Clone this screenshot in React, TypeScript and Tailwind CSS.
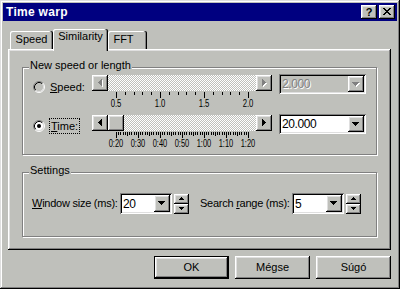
import React from "react";

const raised =
  "shadow-[inset_-1px_-1px_0_#000,inset_1px_1px_0_#fff,inset_-2px_-2px_0_#808080,inset_2px_2px_0_#dfdfdf]";
const sunken =
  "shadow-[inset_1px_1px_0_#808080,inset_-1px_-1px_0_#fff,inset_2px_2px_0_#000,inset_-2px_-2px_0_#dfdfdf]";
const winShadow =
  "shadow-[inset_-1px_-1px_0_#000,inset_1px_1px_0_#dfdfdf,inset_-2px_-2px_0_#808080,inset_2px_2px_0_#fff]";

type Dir = "left" | "right" | "down" | "up5" | "down5";

function triRects(dir: Dir): { x: number; y: number; w: number; h: number }[] {
  const r: { x: number; y: number; w: number; h: number }[] = [];
  if (dir === "left") for (let i = 0; i < 4; i++) r.push({ x: i, y: 3 - i, w: 1, h: 2 * i + 1 });
  if (dir === "right") for (let i = 0; i < 4; i++) r.push({ x: i, y: i, w: 1, h: 7 - 2 * i });
  if (dir === "down") for (let i = 0; i < 4; i++) r.push({ x: i, y: i, w: 7 - 2 * i, h: 1 });
  if (dir === "up5") for (let i = 0; i < 3; i++) r.push({ x: 2 - i, y: i, w: 2 * i + 1, h: 1 });
  if (dir === "down5") for (let i = 0; i < 3; i++) r.push({ x: i, y: i, w: 5 - 2 * i, h: 1 });
  return r;
}

function Tri({ dir, disabled }: { dir: Dir; disabled?: boolean }) {
  const rects = triRects(dir);
  const w = dir === "left" || dir === "right" ? 4 : dir === "down" ? 7 : 5;
  const h = dir === "left" || dir === "right" ? 7 : dir === "down" ? 4 : 3;
  return (
    <svg width={w + 1} height={h + 1} viewBox={`0 0 ${w + 1} ${h + 1}`} shapeRendering="crispEdges">
      {disabled &&
        rects.map((q, i) => <rect key={"s" + i} x={q.x + 1} y={q.y + 1} width={q.w} height={q.h} fill="#fff" />)}
      {rects.map((q, i) => (
        <rect key={i} x={q.x} y={q.y} width={q.w} height={q.h} fill={disabled ? "#808080" : "#000"} />
      ))}
    </svg>
  );
}

function Radio({ checked, fill }: { checked?: boolean; fill: string }) {
  return (
    <svg width="12" height="12" viewBox="0 0 12 12" className="shrink-0">
      <circle cx="6" cy="6" r="4.5" fill={fill} />
      <path d="M2.11 9.89 A5.5 5.5 0 0 1 9.89 2.11" stroke="#808080" fill="none" />
      <path d="M9.89 2.11 A5.5 5.5 0 0 1 2.11 9.89" stroke="#fff" fill="none" />
      <path d="M2.82 9.18 A4.5 4.5 0 0 1 9.18 2.82" stroke="#000" fill="none" />
      <path d="M9.18 2.82 A4.5 4.5 0 0 1 2.82 9.18" stroke="#dfdfdf" fill="none" />
      {checked && <circle cx="6" cy="6" r="2" fill="#000" />}
    </svg>
  );
}

function ArrowBtn({ dir, disabled }: { dir: Dir; disabled?: boolean }) {
  return (
    <div className={`w-[16px] h-[16px] shrink-0 bg-[#bfc0bb] ${raised} flex items-center justify-center`}>
      <Tri dir={dir} disabled={disabled} />
    </div>
  );
}

function Ticks({ count, step, major, mid }: { count: number; step: number; major: number; mid?: number }) {
  const items = [];
  for (let i = 0; i <= count; i++) {
    const x = Math.round(24 + i * step);
    const len = i % major === 0 ? 6 : mid && i % mid === 0 ? 4 : 3;
    items.push(<rect key={i} x={x} y={1} width={1} height={len} fill="#000" />);
  }
  return (
    <svg width="180" height="7" viewBox="0 0 180 7" shapeRendering="crispEdges" className="block">
      {items}
    </svg>
  );
}

function Combo({ value, disabled, wide }: { value: string; disabled?: boolean; wide?: boolean }) {
  return (
    <div
      className={`${sunken} ${disabled ? "bg-[#bfc0bb]" : "bg-white"} ${
        wide ? "w-[87px] h-[20px]" : "w-[52px] h-[21px]"
      } p-[2px] flex items-stretch shrink-0`}
    >
      <span
        className={`flex-1 pl-[1px] text-[12px] leading-[16px] tracking-[-0.4px] flex items-center ${
          disabled ? "text-[#808080] [text-shadow:1px_1px_0_#fff]" : "text-black"
        }`}
      >
        {value}
      </span>
      <div className={`w-[16px] bg-[#bfc0bb] ${raised} flex items-center justify-center`}>
        <Tri dir="down" disabled={disabled} />
      </div>
    </div>
  );
}

function Spinner() {
  return (
    <div className="flex flex-col ml-[2px] mt-[1px] self-start">
      <div className={`w-[15px] h-[10px] bg-[#bfc0bb] ${raised} flex items-center justify-center`}>
        <Tri dir="up5" />
      </div>
      <div className={`w-[15px] h-[10px] bg-[#bfc0bb] ${raised} flex items-center justify-center`}>
        <Tri dir="down5" />
      </div>
    </div>
  );
}

function Group({ label, className, children }: { label: string; className: string; children: React.ReactNode }) {
  return (
    <div
      className={`relative w-[355px] border border-[#808080] shadow-[inset_1px_1px_0_#fff,1px_1px_0_#fff] ${className}`}
    >
      <span className="absolute -top-[9px] left-[6px] px-[1px] bg-[#bfc0bb] leading-[13px]">{label}</span>
      {children}
    </div>
  );
}

function U({ children }: { children: React.ReactNode }) {
  return <span className="underline underline-offset-1">{children}</span>;
}

export default function App() {
  return (
    <div
      className={`w-[400px] h-[289px] bg-[#bfc0bb] p-[3px] flex flex-col ${winShadow} font-['Liberation_Sans',Arial,sans-serif] text-[11px] leading-[13px] text-black select-none`}
    >
      {/* Title bar */}
      <div className="h-[18px] shrink-0 bg-[#000080] flex items-center pl-[3px] pr-[2px]">
        <span className="text-white font-bold text-[12px] leading-[14px] tracking-[0.3px]">Time warp</span>
        <div className="ml-auto flex gap-[2px]">
          <div
            className={`w-[16px] h-[14px] bg-[#bfc0bb] ${raised} flex items-center justify-center font-bold text-[11px] leading-[11px]`}
          >
            ?
          </div>
          <div className={`w-[16px] h-[14px] bg-[#bfc0bb] ${raised} flex items-center justify-center`}>
            <svg width="8" height="7" viewBox="0 0 8 7" shapeRendering="crispEdges" className="-mt-[1px]">
              <rect x="0" y="0" width="2" height="1" fill="#000" />
              <rect x="6" y="0" width="2" height="1" fill="#000" />
              <rect x="1" y="1" width="2" height="1" fill="#000" />
              <rect x="5" y="1" width="2" height="1" fill="#000" />
              <rect x="2" y="2" width="4" height="1" fill="#000" />
              <rect x="3" y="3" width="2" height="1" fill="#000" />
              <rect x="2" y="4" width="4" height="1" fill="#000" />
              <rect x="1" y="5" width="2" height="1" fill="#000" />
              <rect x="5" y="5" width="2" height="1" fill="#000" />
              <rect x="0" y="6" width="2" height="1" fill="#000" />
              <rect x="6" y="6" width="2" height="1" fill="#000" />
            </svg>
          </div>
        </div>
      </div>

      {/* Tabs + panel */}
      <div className="pl-[5px] mt-[8px] flex flex-col">
        <div className="flex items-end h-[20px] pl-[2px]">
          <div className="w-[43px] h-[18px] rounded-t-[2px] shadow-[inset_-1px_0_0_#000,inset_-2px_0_0_#808080,inset_1px_1px_0_#fff] flex justify-center pt-[2px]">
            Speed
          </div>
          <div className="relative z-10 w-[55px] h-[22px] -mb-[2px] bg-[#bfc0bb] rounded-t-[2px] shadow-[inset_-1px_0_0_#000,inset_-2px_0_0_#808080,inset_1px_1px_0_#fff] flex justify-center pt-[1px]">
            Similarity
          </div>
          <div className="w-[39px] h-[18px] rounded-t-[2px] shadow-[inset_-1px_0_0_#000,inset_-2px_0_0_#808080,inset_1px_1px_0_#fff] flex justify-center pt-[2px] pr-[8px]">
            FFT
          </div>
        </div>
        <div className={`w-[383px] h-[201px] ${raised} pl-[14px] pt-[18px] flex flex-col`}>
          <Group label="New speed or length" className="h-[88px] pl-[10px] pt-[6px]">
            {/* Speed row */}
            <div className="flex h-[40px]">
              <div className="w-[59px] h-[16px] mt-[5px] flex items-center">
                <Radio fill="#bfc0bb" />
                <span className="ml-[4px] border border-transparent leading-[14px]">
                  <U>S</U>peed:
                </span>
              </div>
              <div className="w-[180px] mt-[1px] flex flex-col">
                <div className="flex h-[16px]">
                  <ArrowBtn dir="left" disabled />
                  <div className="flex-1 bg-[image:repeating-conic-gradient(#fff_0_25%,#bfc0bb_0_50%)] [background-size:2px_2px]" />
                  <ArrowBtn dir="right" disabled />
                </div>
                <Ticks count={15} step={8.8} major={5} />
                <div className="flex ml-[2px] text-[11px] leading-[10px]">
                  {["0.5", "1.0", "1.5", "2.0"].map((t) => (
                    <span key={t} className="w-[44px] text-center whitespace-nowrap scale-x-[0.7]">
                      {t}
                    </span>
                  ))}
                </div>
              </div>
              <div className="ml-[7px]">
                <Combo value="2.000" disabled wide />
              </div>
            </div>
            {/* Time row */}
            <div className="flex h-[40px]">
              <div className="w-[59px] h-[16px] mt-[4px] flex items-center">
                <Radio fill="#fff" checked />
                <span className="ml-[4px] border border-dotted border-black px-[1px] leading-[14px]">
                  <U>T</U>ime:
                </span>
              </div>
              <div className="w-[180px] mt-[1px] flex flex-col">
                <div className="flex h-[16px]">
                  <ArrowBtn dir="left" />
                  <div className={`w-[16px] h-[16px] shrink-0 bg-[#bfc0bb] ${raised}`} />
                  <div className="flex-1 bg-[image:repeating-conic-gradient(#fff_0_25%,#bfc0bb_0_50%)] [background-size:2px_2px]" />
                  <ArrowBtn dir="right" />
                </div>
                <Ticks count={60} step={2.2} major={10} mid={5} />
                <div className="flex ml-[13px] text-[11px] leading-[10px]">
                  {["0:20", "0:30", "0:40", "0:50", "1:00", "1:10", "1:20"].map((t) => (
                    <span key={t} className="w-[22px] text-center whitespace-nowrap scale-x-[0.68]">
                      {t}
                    </span>
                  ))}
                </div>
              </div>
              <div className="ml-[7px]">
                <Combo value="20.000" wide />
              </div>
            </div>
          </Group>

          <Group label="Settings" className="h-[65px] mt-[17px] pl-[9px] pt-[20px]">
            <div className="flex items-center h-[21px]">
              <span className="w-[88px] whitespace-nowrap tracking-[-0.25px]">
                <U>W</U>indow size (ms):
              </span>
              <Combo value="20" />
              <Spinner />
              <span className="w-[92px] ml-[11px] whitespace-nowrap tracking-[-0.25px]">
                Search <U>r</U>ange (ms):
              </span>
              <Combo value="5" />
              <Spinner />
            </div>
          </Group>
        </div>
      </div>

      {/* Buttons */}
      <div className="flex justify-end gap-[6px] pr-[6px] mt-[6px]">
        <div className="w-[75px] h-[23px] border border-black">
          <div className={`w-full h-full ${raised} flex items-center justify-center`}>OK</div>
        </div>
        <div className={`w-[75px] h-[23px] ${raised} flex items-center justify-center`}>Mégse</div>
        <div className={`w-[75px] h-[23px] ${raised} flex items-center justify-center`}>Súgó</div>
      </div>
    </div>
  );
}
